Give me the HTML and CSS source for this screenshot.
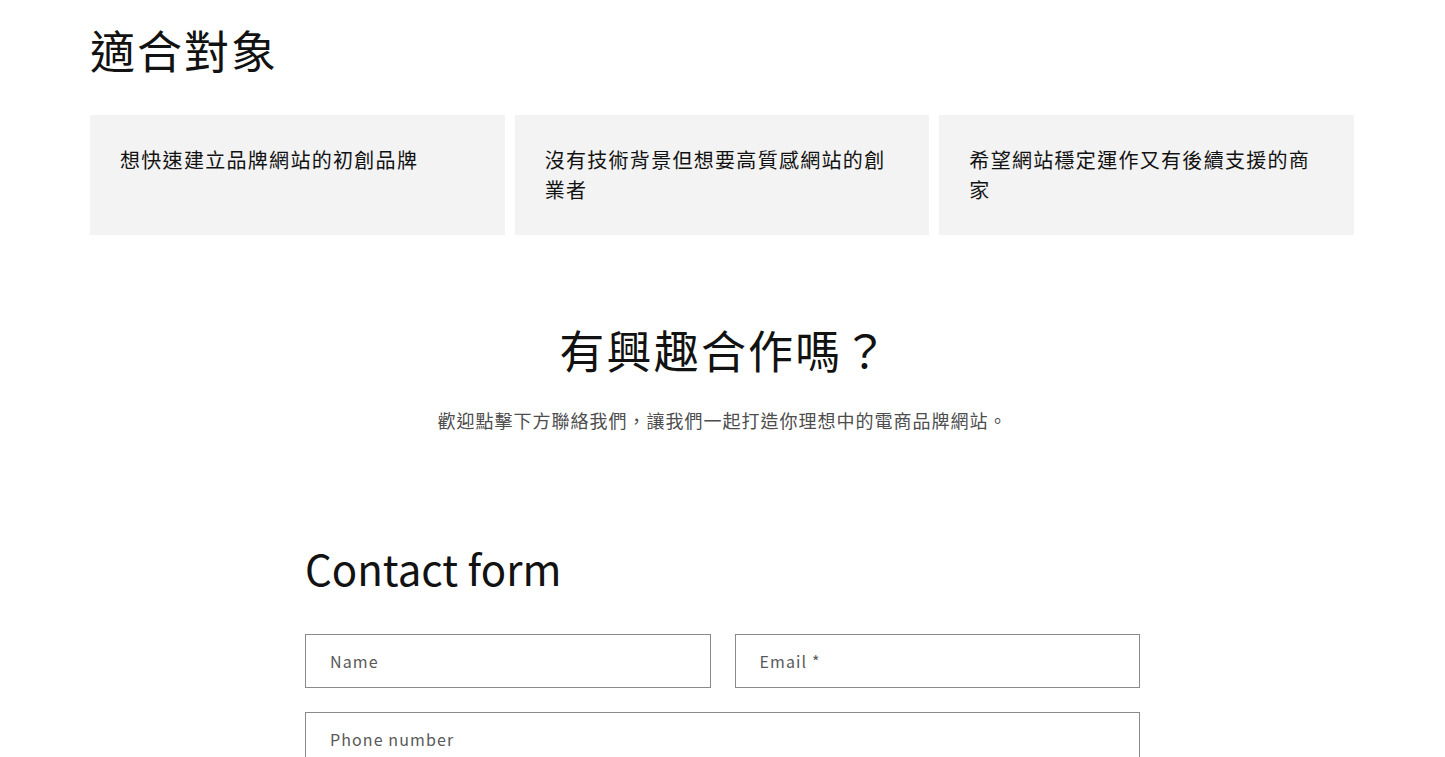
FILE: index.html
```html
<!DOCTYPE html>
<html lang="zh-Hant">
<head>
    <meta charset="UTF-8">
    <meta name="viewport" content="width=device-width, initial-scale=1.0">
    <title>適合對象</title>
    <link rel="stylesheet" href="styles.css">
</head>
<body>
    <section class="audience">
        <h2 class="section-title">適合對象</h2>
        <div class="audience-grid">
            <div class="audience-card">想快速建立品牌網站的初創品牌</div>
            <div class="audience-card">沒有技術背景但想要高質感網站的創業者</div>
            <div class="audience-card">希望網站穩定運作又有後續支援的商家</div>
        </div>
    </section>

    <section class="cta">
        <h2 class="cta-title">有興趣合作嗎？</h2>
        <p class="cta-text">歡迎點擊下方聯絡我們，讓我們一起打造你理想中的電商品牌網站。</p>
    </section>

    <!-- Contact form -->
    <section class="contact">
        <h2 class="contact-title">Contact form</h2>
        <form class="contact-form">
            <div class="field-row">
                <label class="field">
                    <input type="text" placeholder="Name">
                </label>
                <label class="field">
                    <input type="email" placeholder="Email *">
                </label>
            </div>
            <label class="field">
                <input type="tel" placeholder="Phone number">
            </label>
        </form>
    </section>
</body>
</html>
```

FILE: styles.css
```css
body {
    font-family: "Noto Sans CJK TC", "Noto Sans", sans-serif;
    margin: 0;
    padding: 0;
    background-color: #fff;
    color: #121212;
}

h2 {
    font-weight: 400;
    margin: 0;
}

/* Audience section */
.audience {
    padding: 21px 91px 0 90px;
}

.section-title {
    font-size: 45px;
    line-height: 58px;
    letter-spacing: 2px;
}

.audience-grid {
    display: grid;
    grid-template-columns: repeat(3, 1fr);
    gap: 10px;
    margin-top: 36px;
}

.audience-card {
    background-color: #f3f3f3;
    height: 120px;
    box-sizing: border-box;
    padding: 30px 30px 0 30px;
    font-size: 20px;
    line-height: 30px;
    letter-spacing: 1.3px;
}

/* Call to action */
.cta {
    text-align: center;
    padding-top: 86px;
}

.cta-title {
    font-size: 45px;
    line-height: 58px;
    letter-spacing: 2.2px;
    padding-left: 4px;
}

.cta-text {
    margin: 27px 0 0;
    font-size: 18px;
    line-height: 28px;
    letter-spacing: 1px;
    color: #4d4d4d;
}

/* Contact form */
.contact {
    max-width: 835px;
    margin: 0 auto;
    padding-top: 107px;
}

.contact-title {
    font-size: 42px;
    line-height: 54px;
}

.contact-form {
    margin-top: 39px;
    display: flex;
    flex-direction: column;
    gap: 24px;
}

.field-row {
    display: flex;
    gap: 24px;
}

.field {
    flex: 1;
    display: block;
}

.field input {
    width: 100%;
    box-sizing: border-box;
    height: 54px;
    border: 1px solid #8a8a8a;
    padding: 0 24px;
    font-family: inherit;
    font-size: 16px;
    letter-spacing: 1.1px;
    color: #121212;
    background: #fff;
    outline: none;
}

.field input::placeholder {
    color: #595959;
}
```
